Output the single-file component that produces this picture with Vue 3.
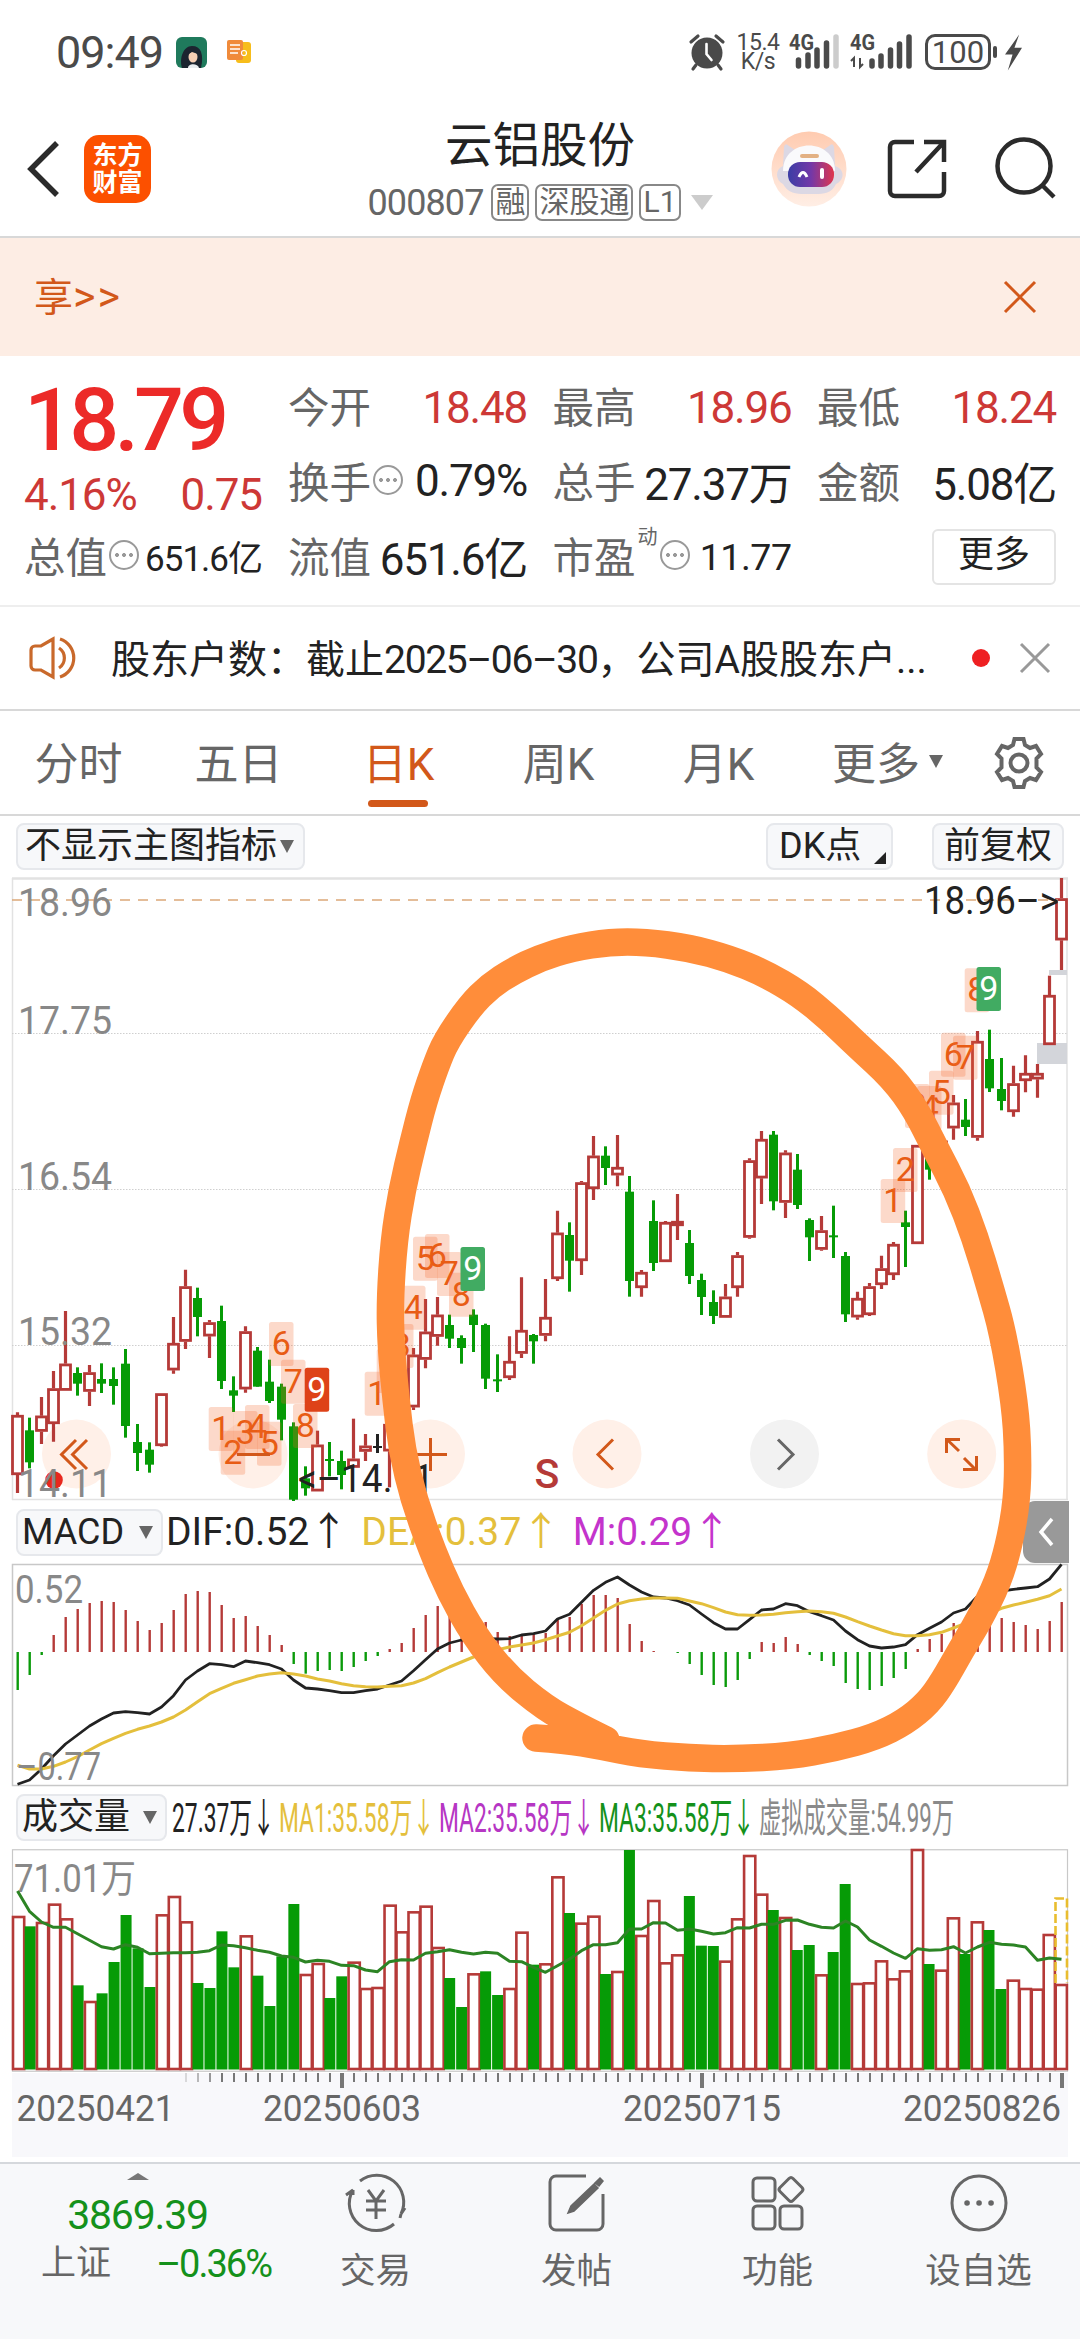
<template>
  <div class="page">
    <!-- 状态栏 -->
    <div class="status-bar">
      <span class="clock">09:49</span>
      <svg class="app-avatar" viewBox="0 0 31 31">
        <rect width="31" height="31" rx="6" fill="#1f7a5c" />
        <path d="M6 31C3 22 7 9 16 9s12 8 9 22z" fill="#1c2530" />
        <ellipse cx="17" cy="20" rx="4.500" ry="5.500" fill="#f6cfb4" />
        <path d="M11 18c2-6 9-6 11-1l-6-2z" fill="#1c2530" />
        <path d="M12 31c0-5 10-5 11 0z" fill="#e9edf0" />
      </svg>
      <svg class="app-doc" viewBox="0 0 24 24">
        <rect x="9" y="2" width="15" height="21" rx="3" fill="#f7bd1b" />
        <rect width="16" height="20" rx="2" fill="#f08a3a" />
        <path d="M3 5h10M3 9h10M3 13h8" stroke="#fff" stroke-width="1.4" />
        <circle cx="17" cy="13" r="2.5" fill="none" stroke="#fff" stroke-width="1.2" />
      </svg>
      <div class="status-right">
        <svg class="alarm" viewBox="0 0 36 36">
          <circle cx="18" cy="19" r="15.5" fill="#4a4a4a" />
          <path d="M2 8l7-6M34 8l-7-6M7 31l-3 4M29 31l3 4" stroke="#4a4a4a" stroke-width="3.2" stroke-linecap="round" />
          <path d="M17.500 10v10l5 6" stroke="#fff" stroke-width="2.600" fill="none" stroke-linecap="round" />
        </svg>
        <div class="speed"><div>15.4</div><div>K/s</div></div>
        <svg class="signal" viewBox="0 0 52 36">
          <text x="0" y="16" class="net" textLength="25" lengthAdjust="spacingAndGlyphs">4G</text>
          <path d="M9.500 26v6M19 21v11M28 16v16M37.500 9v23" class="bar" />
          <path d="M47 3v29" class="bar-off" />
        </svg>
        <svg class="signal second" viewBox="0 0 64 36">
          <text x="0" y="16" class="net" textLength="25" lengthAdjust="spacingAndGlyphs">4G</text>
          <path d="M4 33V24l-3 3M10 24v9l3-3" stroke="#4a4a4a" stroke-width="2" fill="none" />
          <path d="M22 27v5M31 22v10M40.500 16v16M49.500 10v22M59 3v29" class="bar" />
        </svg>
        <div class="battery">100</div>
        <svg class="bolt" viewBox="0 0 18 38">
          <path d="M15 0L0 21h8L3 38 18 14h-8z" fill="#4a4a4a" />
        </svg>
      </div>
    </div>

    <!-- 标题栏 -->
    <header class="header">
      <svg class="back" viewBox="0 0 34 56">
        <path d="M31 2L5 28l26 26" fill="none" stroke="#2b2b2b" stroke-width="5.500" />
      </svg>
      <div class="logo"><div>东方</div><div>财富</div></div>
      <div class="title-box">
        <div class="title">云铝股份</div>
        <div class="code-row">
          <span class="code">000807</span>
          <span class="tag">融</span>
          <span class="tag">深股通</span>
          <span class="tag">L1</span>
          <i class="caret-down light"></i>
        </div>
      </div>
      <div class="header-icons">
        <svg width="76" height="76" viewBox="0 0 76 76">
          <defs>
            <linearGradient id="face" x1="0" x2="1">
              <stop offset="0" stop-color="#3b3da5" />
              <stop offset=".5" stop-color="#7338a8" />
              <stop offset="1" stop-color="#e0364d" />
            </linearGradient>
            <linearGradient id="halo" x1="0" x2="0" y1="0" y2="1">
              <stop offset="0" stop-color="#ffcbb0" />
              <stop offset="1" stop-color="#ffeee5" />
            </linearGradient>
          </defs>
          <circle cx="38" cy="38" r="37.500" fill="url(#halo)" />
          <path d="M13 16q1-5 5-1l6 4h28l6-4q4-4 5 1l1 19c10 3 10 14 1 18-5 11-15 10-26 10S18 64 12 53c-8-4-8-15 0-18z" fill="#dcd8e4" />
          <path d="M12 40c0-34 52-34 52 0z" fill="#fafafc" />
          <rect x="29" y="23" width="19" height="4" rx="2" fill="#e3b184" />
          <rect x="17" y="31" width="46" height="25" rx="12" fill="url(#face)" />
          <path d="M28 46q4-9 8 0" fill="none" stroke="#fff" stroke-width="3" />
          <rect x="49" y="37" width="4" height="11" rx="2" fill="#fff" />
        </svg>
        <svg class="share" width="62" height="62" viewBox="0 0 62 62">
          <path d="M27 4H8a5 5 0 0 0-5 5v44a5 5 0 0 0 5 5h44a5 5 0 0 0 5-5V34" class="dark" />
          <path d="M37 4h20v20M57 4L29 34" class="dark" />
        </svg>
        <svg width="64" height="64" viewBox="0 0 64 64">
          <circle cx="30" cy="29" r="26.500" class="dark" />
          <path d="M48 48l12 12" class="dark" />
        </svg>
      </div>
    </header>

    <div class="banner">
      <span>享<em>&gt;&gt;</em></span>
      <svg width="34" height="34" viewBox="0 0 34 34">
        <path d="M2 2l30 30M32 2L2 32" stroke="#d2581a" stroke-width="3" />
      </svg>
    </div>

    <!-- 行情数据 -->
    <section class="quote">
      <div class="price-col">
        <div class="price">18.79</div>
        <div class="change"><span>4.16%</span><span>0.75</span></div>
        <div class="cell small"><label>总值</label><i class="dots"></i><b>651.6亿</b></div>
      </div>
      <div class="quote-grid">
        <div v-for="item in quotes" :key="item.label" class="cell" :class="item.cls">
          <label>{{ item.label }}</label>
          <sup v-if="item.sup">{{ item.sup }}</sup>
          <i v-if="item.dots" class="dots"></i>
          <b>{{ item.value }}</b>
        </div>
        <div class="cell more-cell"><button class="more">更多</button></div>
      </div>
    </section>

    <div class="notice">
      <svg class="speaker" width="52" height="44" viewBox="0 0 52 44">
        <path d="M24 3L12 10H6a4 4 0 0 0-4 4v16a4 4 0 0 0 4 4h6l12 7z" />
        <path d="M30 12a12 12 0 0 1 0 20M31 3a20 20 0 0 1 0 38" />
      </svg>
      <span class="notice-text">股东户数：截止<em>2025–06–30</em>，公司A股股东户...</span>
      <i class="red-dot"></i>
      <svg width="30" height="30" viewBox="0 0 30 30">
        <path d="M1 1l28 28M29 1L1 29" stroke="#999" stroke-width="3" />
      </svg>
    </div>

    <nav class="tabs">
      <div v-for="tab in tabs" :key="tab" class="tab" :class="{ active: tab === '日K' }">
        {{ tab }}<i v-if="tab === '更多'" class="caret-down"></i>
      </div>
      <svg class="gear" width="54" height="54" viewBox="0 0 54 54">
        <path
          d="M22.500 3h9l1.500 6 5 3 6-2 5 8-4.500 4.500v9L49 36l-5 8-6-2-5 3-1.500 6h-9L21 45l-5-3-6 2-5-8 4.500-4.500v-9L5 18l5-8 6 2 5-3z"
        />
        <circle cx="27" cy="27" r="8.500" />
      </svg>
    </nav>

    <div class="toolbar">
      <span class="chip main">不显示主图指标<i class="caret-down"></i></span>
      <span class="chip dk">DK点<i class="corner"></i></span>
      <span class="chip right">前复权</span>
    </div>

    <!-- K线主图 -->
    <svg class="chart" width="1080" height="624" viewBox="0 878 1080 624">
      <path d="M12 879.500H1068" stroke="#e2e2e2" stroke-width="2.500" />
      <path d="M12.500 879V1501M1067 879V1501M12 1500.500H1068" stroke="#e2e2e2" stroke-width="1.500" fill="none" />
      <path d="M12 1034.500H1067M12 1190.500H1067M12 1346.500H1067" stroke="#cfcfcf" stroke-width="1" stroke-dasharray="1.500 1.500" />
      <rect x="1049" y="971" width="18" height="5" fill="#d3d5da" />
      <rect x="1037" y="1044" width="30" height="21" fill="#d3d5da" />

      <circle v-for="b in buttons" :key="b.x" :cx="b.x" cy="1455" r="34.500" :fill="b.off ? '#f2f2f2' : '#fff0e8'" />

      <g v-for="c in candles" :key="c.x">
        <template v-if="c.type === 'r'">
          <path :d="`M${c.x} ${c.high}V${c.top}M${c.x} ${c.bottom}V${c.low}`" stroke="#b53a38" stroke-width="3.200" />
          <rect
            :x="c.x - 5"
            :y="c.top + 1.25"
            width="10"
            :height="Math.max(c.bottom - c.top - 2.5, 0.5)"
            fill="#fff"
            stroke="#b53a38"
            stroke-width="2.800"
          />
        </template>
        <template v-else>
          <path :d="`M${c.x} ${c.high}V${c.low}`" :stroke="c.type === 'g' ? '#069b06' : '#222'" stroke-width="3" />
          <rect :x="c.x - 4.5" :y="c.top" width="9" :height="c.bottom - c.top" :fill="c.type === 'g' ? '#069b06' : '#222'" />
        </template>
      </g>

      <g v-for="(m, i) in marks" :key="'m' + i">
        <rect :x="m[1]" :y="m[2]" width="24.500" height="44" rx="2.500" :fill="markFill(m)" :fill-opacity="m[3] ? 1 : 0.25" />
        <text :x="m[1] + 12.2" :y="m[2] + 33" class="mark" :fill="m[3] ? '#fff' : '#e85c14'">{{ m[0] }}</text>
      </g>

      <path d="M12 901H1058" stroke="#dba878" stroke-width="1.600" stroke-dasharray="10 8" />
      <g fill="none" stroke="#d2581a" stroke-width="3">
        <path d="M76 1441l-14.500 14.500L76 1470M87 1441l-14.500 14.500L87 1470" />
        <path d="M237 1455.500h33" />
        <path d="M430.500 1439v33M414 1455.500h33" />
        <path d="M613 1440.500l-15 15 15 15" />
        <path d="M778 1440.500l15 15-15 15" stroke="#666" />
        <path d="M959 1452l-12-11.500M946.500 1454v-13.500H960M964 1459l12 12M963 1470.500h13.500V1457" />
      </g>
      <circle cx="54" cy="1481" r="8.800" fill="#e8281e" />

      <text v-for="l in priceLabels" :key="l.text" x="18" :y="l.y" class="axis" textLength="94" lengthAdjust="spacingAndGlyphs">{{ l.text }}</text>
      <text x="924" y="915" class="peak" textLength="135" lengthAdjust="spacingAndGlyphs">18.96–&gt;</text>
      <text x="298" y="1493" class="peak" textLength="136" lengthAdjust="spacingAndGlyphs">&lt;–14.11</text>
      <text x="547" y="1489" class="sell">S</text>
    </svg>

    <!-- MACD -->
    <div class="sub-head">
      <span class="chip">MACD<i class="caret-down"></i></span>
      <span class="ind dif">DIF:0.52↑</span>
      <span class="ind dea">DEA:0.37↑</span>
      <span class="ind m">M:0.29↑</span>
      <span class="drawer">
        <svg width="16" height="30" viewBox="0 0 16 30">
          <path d="M14 2L3 15l11 13" fill="none" stroke="#fff" stroke-width="3.500" />
        </svg>
      </span>
    </div>
    <svg class="chart" width="1080" height="223" viewBox="0 1564 1080 223">
      <rect x="12.500" y="1565.500" width="1055" height="221" fill="#fff" stroke="#c8c8c8" stroke-width="1.500" />
      <path
        v-for="(v, i) in macd"
        :key="i"
        :d="`M${17.7 + i * 12} 1653V${1490 + v / 3}`"
        :stroke="v < 489 ? '#b53a38' : '#0a9a0a'"
        stroke-width="2.400"
      />
      <polyline :points="toLine(dif, 1490)" fill="none" stroke="#222" stroke-width="2.800" stroke-linejoin="round" />
      <polyline :points="toLine(dea, 1490)" fill="none" stroke="#e4bf3c" stroke-width="3" stroke-linejoin="round" />
      <text x="15" y="1604" class="axis" textLength="68" lengthAdjust="spacingAndGlyphs">0.52</text>
      <text x="16" y="1781" class="axis" textLength="85" lengthAdjust="spacingAndGlyphs">–0.77</text>
    </svg>

    <!-- 成交量 -->
    <div class="sub-head volume-head">
      <span class="chip">成交量<i class="caret-down"></i></span>
      <svg width="790" height="50" viewBox="170 1793 790 50">
        <text
          v-for="v in volumeLegend"
          :key="v.text"
          :x="v.x"
          y="1832"
          class="legend"
          :fill="v.color"
          :textLength="v.width"
          lengthAdjust="spacingAndGlyphs"
        >{{ v.text }}</text>
      </svg>
    </div>
    <svg class="chart" width="1080" height="312" viewBox="0 1850 1080 312">
      <rect x="12" y="2074" width="1056" height="84" fill="#f8f8fb" />
      <rect x="12.500" y="1850.750" width="1055" height="221.500" fill="#fff" stroke="#c8c8c8" stroke-width="1.200" />
      <text x="14" y="1893" class="axis" textLength="122" lengthAdjust="spacingAndGlyphs">71.01万</text>
      <template v-for="b in volumes" :key="b.x">
        <rect v-if="b.green" :x="b.x - 5.5" :y="b.y" width="11" :height="2070.5 - b.y" fill="#069b06" />
        <rect v-else :x="b.x - 5.2" :y="b.y" width="11.200" :height="2070 - b.y" fill="#fff" stroke="#b53a38" stroke-width="2.600" />
      </template>
      <path d="M1055.500 1984V1899.500H1067V1984" fill="none" stroke="#e9bd2f" stroke-width="2.600" stroke-dasharray="9 3" />
      <polyline :points="toLine(volumeMa, 1790)" fill="none" stroke="#2c8424" stroke-width="3" stroke-linejoin="round" />
      <path
        v-for="i in 74"
        :key="'t' + i"
        :d="`M${18 + (i + 13) * 12} 2074v${isMajor(i + 13) ? 15 : 9}`"
        stroke="#777"
        :stroke-width="isMajor(i + 13) ? 4 : 2"
        :stroke-opacity="Math.min(1, i / 4)"
      />
      <text v-for="d in dates" :key="d.text" :x="d.x" y="2121.500" class="date" textLength="158" lengthAdjust="spacingAndGlyphs">{{ d.text }}</text>
    </svg>

    <!-- 底部导航 -->
    <footer class="bottom">
      <div class="index-box">
        <i class="caret-up"></i>
        <div class="index-value">3869.39</div>
        <div class="index-row"><span>上证</span><em>–0.36%</em></div>
      </div>
      <div class="nav-item">
        <svg viewBox="0 0 66 60">
          <path d="M17 8A27 27 0 0 1 58 41l4-6M58 41l-1 4M51 51A27 27 0 0 1 10 17l-7 5M10 17v5" />
          <path d="M25 17l8 11 8-11M33 28v18M23 28h20M23 37h20" />
        </svg>
        <span>交易</span>
      </div>
      <div class="nav-item">
        <svg viewBox="0 0 66 60">
          <path d="M42 3H12a6 6 0 0 0-6 6v42a6 6 0 0 0 6 6h41a6 6 0 0 0 6-6V21" />
          <path d="M56 5l3 3-4 5-4-3zM50 11l4 4-24 23-6 2 3-7z" fill="#666" stroke-width="1.500" />
        </svg>
        <span>发帖</span>
      </div>
      <div class="nav-item">
        <svg viewBox="0 0 66 60">
          <rect x="8" y="5" width="22" height="23" rx="4" />
          <rect x="8" y="33" width="22" height="23" rx="4" />
          <rect x="35" y="33" width="22" height="23" rx="4" />
          <path d="M44 5.500q2-2 4 0l9 9q2 2 0 4l-9 9q-2 2-4 0l-9-9q-2-2 0-4z" />
        </svg>
        <span>功能</span>
      </div>
      <div class="nav-item">
        <svg viewBox="0 0 66 60">
          <circle cx="33" cy="30" r="27" />
          <path d="M21 30h.1M33 30h.1M45 30h.1" stroke-width="5.500" stroke-linecap="round" />
        </svg>
        <span>设自选</span>
      </div>
    </footer>

    <!-- 手绘圈 -->
    <svg class="doodle" width="1080" height="2340" viewBox="0 0 1080 2340">
      <path :d="doodlePath" />
    </svg>
  </div>
</template>

<script setup>
const quotes = [
  { label: '今开', value: '18.48', cls: 'up' },
  { label: '最高', value: '18.96', cls: 'up' },
  { label: '最低', value: '18.24', cls: 'up' },
  { label: '换手', value: '0.79%', dots: true },
  { label: '总手', value: '27.37万' },
  { label: '金额', value: '5.08亿' },
  { label: '流值', value: '651.6亿' },
  { label: '市盈', value: '11.77', sup: '动', dots: true, cls: 'pe' },
]

const tabs = ['分时', '五日', '日K', '周K', '月K', '更多']

const buttons = [{ x: 76.5 }, { x: 253 }, { x: 430.5 }, { x: 607 }, { x: 784.5, off: true }, { x: 961.7 }]

const priceLabels = [
  { text: '18.96', y: 917 },
  { text: '17.75', y: 1035 },
  { text: '16.54', y: 1191 },
  { text: '15.32', y: 1346 },
  { text: '14.11', y: 1498 },
]

// 每段K线: top 为起始高度, rows 为 [颜色, 最高, 实体上沿, 实体下沿, 最低], 单位 1/3 像素
const candleRuns = [
  {
    top: 1180,
    rows: [
      ['r', 700, 708, 888, 942], ['g', 716, 754, 850, 868], ['r', 654, 710, 758, 795], ['r', 576, 628, 735, 788],
      ['r', 396, 554, 635, 635], ['g', 565, 582, 614, 650], ['r', 558, 580, 638, 681], ['g', 553, 600, 614, 642],
      ['g', 565, 600, 621, 677], ['g', 510, 554, 741, 776], ['g', 735, 789, 822, 876], ['g', 790, 812, 857, 881],
      ['r', 643, 643, 801, 803], ['r', 414, 492, 574, 584], ['r', 272, 322, 488, 510], ['g', 326, 357, 414, 472],
      ['r', 423, 430, 472, 537], ['g', 380, 426, 606, 630], ['g', 592, 634, 650, 699], ['r', 442, 457, 631, 641],
      ['g', 504, 515, 623, 623], ['g', 542, 608, 666, 672], ['g', 614, 623, 722, 784], ['g', 730, 742, 962, 966],
      ['g', 862, 898, 928, 950], ['r', 755, 797, 937, 937], ['g', 789, 840, 846, 892], ['g', 815, 846, 888, 931],
      ['r', 719, 839, 866, 866], ['r', 765, 800, 818, 846], ['k', 765, 801, 807, 822], ['r', 735, 735, 817, 925],
      ['r', 640, 680, 800, 830],
    ],
  },
  {
    top: 1100,
    rows: [
      ['r', 747, 767, 925, 933], ['r', 600, 698, 782, 808], ['r', 594, 647, 713, 740], ['g', 647, 678, 719, 747],
      ['g', 709, 717, 747, 794], ['g', 631, 647, 678, 759], ['g', 674, 678, 839, 870], ['g', 766, 841, 847, 879],
      ['r', 712, 786, 837, 843], ['r', 535, 693, 764, 777], ['g', 705, 708, 727, 794], ['r', 540, 654, 710, 727],
      ['r', 335, 401, 540, 546], ['g', 370, 408, 485, 578], ['r', 246, 250, 486, 528], ['r', 111, 170, 270, 303],
      ['g', 142, 170, 207, 258], ['r', 108, 204, 229, 262], ['g', 231, 278, 546, 593], ['r', 513, 519, 567, 593],
      ['g', 304, 366, 492, 516], ['r', 366, 369, 489, 489], ['r', 285, 366, 381, 423], ['g', 393, 432, 531, 555],
      ['g', 524, 543, 594, 648], ['g', 574, 609, 651, 675], ['r', 555, 593, 656, 656], ['r', 459, 469, 567, 593],
      ['r', 178, 184, 416, 419], ['r', 96, 120, 238, 315], ['g', 96, 107, 307, 334], ['r', 154, 161, 311, 357],
      ['g', 165, 212, 318, 330], ['g', 358, 363, 415, 486], ['r', 351, 394, 452, 455], ['g', 320, 409, 415, 477],
      ['g', 459, 471, 646, 669], ['r', 578, 597, 655, 662], ['r', 552, 562, 648, 651], ['r', 470, 508, 558, 570],
      ['r', 429, 435, 528, 543], ['g', 335, 370, 384, 504], ['r', 138, 138, 435, 435], ['g', 120, 150, 212, 242],
      ['r', 105, 125, 165, 175],
    ],
  },
  {
    top: 870,
    rows: [
      ['r', 678, 701, 778, 812], ['g', 690, 752, 774, 801], ['r', 486, 516, 806, 815], ['g', 482, 570, 658, 669],
      ['g', 567, 660, 696, 724], ['r', 590, 643, 729, 743], ['r', 559, 612, 636, 670], ['r', 585, 612, 631, 686],
      ['r', 320, 378, 528, 528], ['r', 27, 88, 214, 303],
    ],
  },
]

const candles = candleRuns
  .flatMap((run) => run.rows.map(([type, ...v]) => [type, ...v.map((n) => run.top + n / 3)]))
  .map(([type, high, top, bottom, low], i) => ({ type, high, top, bottom, low, x: 17.5 + i * 12 }))

// 九转序列 [数字, x, y, 高亮颜色]
const marks = [
  [1, 208.7, 1408], [2, 220.7, 1431.7], [3, 233, 1412], [4, 245, 1406], [5, 257, 1422.7],
  [6, 269, 1323], [7, 281, 1360.7], [8, 293, 1405], [9, 304.7, 1368.7, '#de4218'],
  [1, 364.7, 1372.7], [2, 376.7, 1350], [3, 389, 1325], [4, 401, 1286.7], [5, 413, 1237.7],
  [6, 425, 1235], [7, 437, 1253], [8, 449, 1273.7], [9, 460.5, 1248, '#41ab62'],
  [1, 880.7, 1180], [2, 893, 1149], [3, 905, 1085], [4, 917, 1087], [5, 929, 1071.7],
  [6, 941, 1033.7], [7, 953, 1036.7], [8, 964.7, 969.3], [9, 976.5, 968, '#41ab62'],
]
const markFill = (m) => m[3] || '#f4662a'

const macd = [
  603, 558, 498, 438, 384, 360, 342, 336, 339, 363, 396, 423, 402, 363, 315, 306, 309, 348, 387, 381, 411, 438,
  468, 525, 554, 546, 543, 546, 534, 516, 501, 480, 462, 417, 378, 351, 348, 350, 366, 399, 429, 441, 435, 435,
  432, 390, 384, 345, 318, 318, 327, 405, 456, 486, 489, 492, 525, 558, 588, 594, 573, 510, 459, 462, 444, 465,
  498, 516, 531, 582, 600, 603, 591, 567, 540, 480, 450, 435, 402, 396, 390, 385, 387, 399, 408, 420, 396, 339,
]
const dif = [
  886, 873, 840, 800, 765, 738, 711, 690, 672, 668, 671, 675, 654, 620, 573, 546, 524, 527, 533, 516, 521, 527,
  540, 573, 597, 600, 605, 611, 611, 605, 600, 588, 576, 545, 512, 480, 462, 453, 449, 449, 450, 449, 438, 434,
  426, 390, 376, 340, 304, 280, 264, 288, 309, 324, 327, 335, 348, 375, 401, 420, 420, 392, 363, 360, 344, 350,
  368, 380, 393, 426, 452, 471, 477, 474, 467, 437, 418, 399, 372, 360, 322, 315, 306, 301, 297, 293, 270, 226,
]
const dea = [
  829, 840, 840, 832, 819, 803, 783, 764, 748, 733, 721, 711, 699, 684, 663, 638, 614, 598, 583, 572, 561, 555,
  551, 555, 561, 570, 576, 584, 590, 593, 594, 592, 590, 582, 569, 551, 534, 519, 504, 492, 482, 474, 468, 462,
  452, 441, 430, 410, 387, 364, 345, 335, 330, 327, 327, 328, 336, 344, 356, 369, 377, 379, 378, 376, 371, 368,
  366, 368, 373, 384, 398, 411, 423, 434, 440, 440, 437, 430, 417, 403, 389, 373, 358, 348, 340, 331, 320, 300,
]

// 负数为阴线
const volumeTops = [
  384, -412, 402, 347, 391, -589, 639, -613, -519, -378, -478, -594, 379, 324, 400, -582, -597, -427, -535, 442,
  -560, -651, -502, -345, 558, 525, -627, -562, 521, 600, 597, 350, 430, 370, 353, 477, -567, -654, 556, -547,
  -618, 600, 431, -527, 526, 265, -372, 404, 383, -555, 549, -183, 441, 336, 523, 499, -321, -470, -471, 518,
  391, 201, 317, -363, 387, -483, -468, 559, -489, -285, 585, 583, 517, 571, 547, 183, -525, 545, 388, -495,
  400, -423, -600, 575, 600, 602, 438, 588,
]
const volumes = volumeTops.map((v, i) => ({ green: v < 0, x: 18.2 + i * 11.985, y: 1790 + Math.abs(v) / 3 }))

const volumeMa = [
  306, 367, 399, 415, 415, 434, 454, 473, 480, 467, 475, 494, 493, 491, 491, 490, 485, 468, 470, 476, 484, 490,
  501, 505, 519, 514, 517, 529, 530, 543, 548, 518, 512, 513, 493, 488, 482, 490, 495, 490, 493, 517, 518, 535,
  550, 530, 510, 485, 467, 467, 461, 420, 420, 401, 402, 424, 420, 427, 435, 431, 416, 417, 406, 406, 394, 393,
  406, 415, 417, 396, 414, 453, 472, 492, 508, 479, 484, 482, 473, 492, 474, 460, 466, 468, 474, 514, 507, 511,
]

const volumeLegend = [
  { text: '27.37万↓', x: 172, width: 103, color: '#222' },
  { text: 'MA1:35.58万↓', x: 279, width: 156, color: '#e4bf3c' },
  { text: 'MA2:35.58万↓', x: 439, width: 156, color: '#b636c4' },
  { text: 'MA3:35.58万↓', x: 599, width: 156, color: '#14911b' },
  { text: '虚拟成交量:54.99万', x: 759, width: 195, color: '#8a8a8a' },
]

const dates = [
  { text: '20250421', x: 16.5 },
  { text: '20250603', x: 263 },
  { text: '20250715', x: 623 },
  { text: '20250826', x: 903 },
]

const isMajor = (i) => i % 30 === 27
const toLine = (list, top) => list.map((v, i) => `${17.5 + i * 12},${(top + v / 3).toFixed(1)}`).join(' ')

const doodle = [
  [536, 1738], [565, 1740], [600, 1746], [640, 1754], [690, 1758], [735, 1759], [790, 1756], [835, 1748], [875, 1737],
  [905, 1722], [928, 1703], [943, 1682], [961, 1650], [979, 1620], [998, 1582], [1009, 1545], [1017, 1500], [1018, 1453],
  [1015, 1405], [1003, 1333], [990, 1287], [975, 1237], [957, 1190], [935, 1148], [916, 1110], [893, 1078], [857, 1045],
  [830, 1019], [800, 994], [764, 973], [730, 959], [690, 948], [645, 942], [610, 942], [572, 948], [540, 958], [513, 971],
  [490, 986], [470, 1006], [446, 1041], [436, 1065], [424, 1100], [413, 1143], [402, 1190], [394, 1240], [390, 1300],
  [391, 1347], [396, 1400], [402, 1450], [414, 1500], [432, 1550], [450, 1592], [474, 1635], [505, 1675], [545, 1708],
  [580, 1727], [606, 1740],
]
// 中点二次曲线平滑
const doodlePath = doodle.reduce((d, p, i) => {
  if (i === 0) return `M${p[0]} ${p[1]}`
  const next = doodle[i + 1]
  if (!next) return `${d}L${p[0]} ${p[1]}`
  return `${d}Q${p[0]} ${p[1]} ${(p[0] + next[0]) / 2} ${(p[1] + next[1]) / 2}`
}, '')
</script>

<style>
body {
  background: #fff;
}
</style>

<style scoped>
.page {
  position: relative;
  width: 1080px;
  height: 2340px;
  overflow: hidden;
  display: flex;
  flex-direction: column;
  background: #fff;
  color: #222;
  font-family: Roboto, 'Noto Sans CJK SC', sans-serif;
}
.page * {
  box-sizing: border-box;
}
.page > * {
  flex-shrink: 0;
}
.page svg {
  display: block;
  overflow: visible;
}
em,
i,
b {
  font-style: normal;
  font-weight: 400;
}

/* 状态栏 */
.status-bar {
  height: 107px;
  padding: 0 58px 3px 56px;
  display: flex;
  align-items: center;
  color: #4a4a4a;
}
.clock {
  font-size: 45px;
  letter-spacing: -1px;
}
.app-avatar {
  width: 31px;
  height: 31px;
  margin-left: 13px;
}
.app-doc {
  width: 24px;
  height: 24px;
  margin-left: 20px;
}
.status-right {
  margin-left: auto;
  display: flex;
  align-items: center;
}
.alarm {
  width: 36px;
  height: 36px;
}
.speed {
  width: 44px;
  margin-left: 11px;
  font-size: 23px;
  line-height: 19px;
  text-align: center;
  letter-spacing: -0.5px;
}
.signal {
  width: 52px;
  height: 36px;
  margin-left: 9px;
}
.signal.second {
  width: 64px;
  margin-left: 9px;
}
.net {
  font-size: 22px;
  font-weight: 700;
  fill: #4a4a4a;
}
.bar,
.bar-off {
  stroke: #4a4a4a;
  stroke-width: 5.5;
  stroke-linecap: round;
}
.bar-off {
  stroke: #ccc;
}
.battery {
  position: relative;
  width: 66px;
  height: 36px;
  margin-left: 11px;
  border: 3px solid #4a4a4a;
  border-radius: 10px;
  font-size: 31px;
  line-height: 31px;
  text-align: center;
}
.battery::after {
  content: '';
  position: absolute;
  right: -9px;
  top: 9px;
  width: 4px;
  height: 12px;
  border-radius: 2px;
  background: #4a4a4a;
}
.bolt {
  width: 17px;
  height: 37px;
  margin-left: 14px;
}

/* 标题栏 */
.header {
  height: 131px;
  padding: 0 27px 5px 26px;
  display: grid;
  grid-template-columns: 34px 68px 643px 282px;
  align-items: center;
  border-bottom: 2px solid #d8d8d8;
}
.back {
  width: 34px;
  height: 56px;
}
.logo {
  width: 67px;
  height: 68px;
  margin-left: 24px;
  padding-top: 7px;
  border-radius: 15px;
  background: #fc5000;
  color: #fff;
  font-size: 25px;
  line-height: 27px;
  font-weight: 700;
  text-align: center;
}
.title-box {
  width: 460px;
  margin-left: 182px;
  padding-top: 4px;
  display: flex;
  flex-direction: column;
  align-items: center;
}
.title {
  height: 63px;
  font-size: 47.500px;
  line-height: 56px;
}
.code-row {
  display: flex;
  align-items: center;
  height: 44px;
  color: #666;
}
.code {
  font-size: 36px;
  letter-spacing: -0.9px;
  margin-right: 8px;
}
.tag {
  height: 37px;
  margin-right: 6px;
  padding: 0 2px;
  border: 2px solid #888;
  border-radius: 7px;
  font-size: 30px;
  line-height: 31px;
}
.caret-down {
  display: inline-block;
  border: 7px solid transparent;
  border-top: 13px solid #666;
  border-bottom: 0;
}
.caret-down.light {
  margin-left: 4px;
  border-width: 15px 11px 0;
  border-top-color: #ccc;
}
.header-icons {
  grid-column: 4;
  display: flex;
  align-items: center;
}
.share {
  margin: 0 45px 0 40px;
}
.dark {
  fill: none;
  stroke: #2b2b2b;
  stroke-width: 4.5;
}

.banner {
  height: 118px;
  padding: 0 43px 0 34px;
  display: flex;
  align-items: center;
  justify-content: space-between;
  background: #fdede4;
  color: #d2581a;
  font-size: 39px;
}
.banner span {
  padding-bottom: 6px;
}
.banner em {
  font-size: 43px;
  letter-spacing: 2px;
}

/* 行情数据 */
.quote {
  height: 251px;
  padding: 14px 24px 0;
  display: flex;
  border-bottom: 2px solid #eee;
}
.price-col {
  width: 239px;
}
.price {
  height: 101px;
  padding: 4px 0 0;
  font-size: 88px;
  line-height: 91px;
  font-weight: 500;
  letter-spacing: -4.8px;
  color: #ec2a28;
}
.change {
  height: 49px;
  display: flex;
  justify-content: space-between;
  font-size: 44px;
  line-height: 49px;
  letter-spacing: -1.1px;
  color: #cd3836;
}
.quote-grid {
  width: 768px;
  margin-left: 26px;
  display: grid;
  grid-template-columns: repeat(3, 239px);
  grid-template-rows: repeat(3, 75px);
  column-gap: 25.500px;
}
.cell {
  height: 75px;
  display: flex;
  align-items: center;
  white-space: nowrap;
}
.cell label {
  padding-bottom: 6px;
  font-size: 41.500px;
  color: #666;
}
.cell b {
  margin-left: auto;
  padding-bottom: 3px;
  font-size: 44px;
  letter-spacing: -1.2px;
}
.cell.small b {
  font-size: 35px;
  letter-spacing: -1px;
  padding-bottom: 4px;
}
.cell.pe b {
  font-size: 37.500px;
  letter-spacing: -0.5px;
  padding-bottom: 2px;
}
.cell.up b {
  padding-bottom: 0;
  color: #cd3836;
}
.cell sup {
  align-self: flex-start;
  margin: 2px 0 0 2px;
  font-size: 20px;
  line-height: 30px;
  color: #666;
}
.dots {
  width: 30px;
  height: 30px;
  margin: 0 0 5px 2px;
  border: 2px solid #999;
  border-radius: 50%;
  background:
    radial-gradient(circle at 6px 50%, #999 1.8px, transparent 2.2px),
    radial-gradient(circle at 13px 50%, #999 1.8px, transparent 2.2px),
    radial-gradient(circle at 20px 50%, #999 1.8px, transparent 2.2px);
}
.more-cell {
  justify-content: flex-end;
}
.more {
  width: 124px;
  height: 56px;
  margin-bottom: 2px;
  padding: 0 0 4px;
  border: 2px solid #e4e4e4;
  border-radius: 6px;
  background: #fff;
  font: inherit;
  font-size: 36px;
  line-height: 48px;
  color: #222;
}

.notice {
  height: 104px;
  padding: 0 30px 0 29px;
  display: flex;
  align-items: center;
  border-bottom: 2px solid #d8d8d8;
}
.speaker {
  fill: none;
  stroke: #c9692b;
  stroke-width: 3.2;
}
.notice-text {
  width: 830px;
  margin-left: 30px;
  padding-bottom: 4px;
  font-size: 39px;
  white-space: nowrap;
}
.notice-text em {
  letter-spacing: -1.3px;
}
.red-dot {
  width: 18px;
  height: 18px;
  margin: 0 auto 0 31px;
  border-radius: 50%;
  background: #ee2022;
}

.tabs {
  height: 105px;
  display: flex;
  align-items: center;
  border-bottom: 2px solid #d8d8d8;
}
.tab {
  position: relative;
  width: 160px;
  height: 103px;
  padding: 0 3px 3px 0;
  display: flex;
  align-items: center;
  justify-content: center;
  font-size: 44px;
  color: #666;
}
.tab:last-of-type {
  width: 178px;
}
.tab .caret-down {
  margin-left: 9px;
}
.tab.active {
  color: #d2581a;
}
.tab.active::after {
  content: '';
  position: absolute;
  left: 48px;
  bottom: 7px;
  width: 60px;
  height: 7px;
  border-radius: 4px;
  background: #d2581a;
}
.gear {
  margin-left: 14px;
  fill: none;
  stroke: #666;
  stroke-width: 4;
}

.toolbar {
  height: 61px;
  padding: 0 16px;
  display: flex;
  align-items: center;
}
.chip {
  position: relative;
  height: 47px;
  padding: 0 8px 0 7px;
  border: 2px solid #e6e8ec;
  border-radius: 8px;
  background: #f7f8fa;
  display: flex;
  align-items: center;
  font-size: 36px;
  line-height: 43px;
  white-space: nowrap;
}
.chip.main {
  width: 289px;
}
.chip .caret-down {
  margin-left: 3px;
}
.chip.dk {
  width: 127px;
  margin: 0 39px 0 auto;
  padding-left: 11px;
}
.chip.right {
  width: 132px;
  padding: 0;
  justify-content: center;
}
.corner {
  position: absolute;
  right: 5px;
  bottom: 4px;
  border-left: 12px solid transparent;
  border-bottom: 12px solid #222;
}

/* 图表 */
.axis {
  font-size: 39px;
  fill: #888;
}
.peak {
  font-size: 39px;
  fill: #222;
}
.mark {
  font-size: 34px;
  text-anchor: middle;
}
.sell {
  font-size: 41px;
  font-weight: 500;
  fill: #b53a38;
  text-anchor: middle;
}
.date {
  font-size: 37px;
  fill: #666;
}
.legend {
  font-size: 40px;
}
.sub-head {
  height: 62px;
  padding-left: 16px;
  display: flex;
  align-items: center;
}
.sub-head .chip {
  width: 147px;
  font-size: 36px;
  padding: 0 8px 0 4px;
  justify-content: space-between;
}
.ind {
  margin-left: 3px;
  font-size: 39px;
  line-height: 56px;
  white-space: nowrap;
}
.dea {
  margin-left: 13px;
  letter-spacing: 0.2px;
  color: #e4bf3c;
}
.m {
  margin-left: 12px;
  color: #c434cc;
}
.drawer {
  width: 46px;
  height: 62px;
  margin: 0 11px 0 auto;
  border-radius: 12px 0 0 12px;
  background: #999;
  display: flex;
  align-items: center;
  justify-content: center;
}
.volume-head {
  height: 63px;
}
.volume-head .chip {
  width: 151px;
  margin-right: 3px;
}

/* 底部导航 */
.bottom {
  height: 177px;
  margin-top: 1px;
  display: flex;
  border-top: 2px solid #d5d8dc;
  background: #f7f8fa;
}
.index-box {
  width: 275px;
  padding-top: 9px;
  display: flex;
  flex-direction: column;
  align-items: center;
}
.caret-up {
  border: 11px solid transparent;
  border-bottom: 7px solid #777;
  border-top: 0;
}
.index-value {
  margin-top: 9px;
  font-size: 41px;
  line-height: 52px;
  letter-spacing: -1.2px;
  color: #14911b;
}
.index-row {
  width: 230px;
  margin-left: 37px;
  display: flex;
  justify-content: space-between;
  font-size: 35px;
  line-height: 46px;
  color: #666;
}
.index-row em {
  font-size: 38px;
  letter-spacing: -2px;
  color: #14911b;
}
.nav-item {
  width: 201px;
  padding-top: 9px;
  display: flex;
  flex-direction: column;
  align-items: center;
  font-size: 35.500px;
  line-height: 50px;
  color: #666;
}
.nav-item svg {
  width: 66px;
  height: 60px;
  margin-bottom: 13px;
  fill: none;
  stroke: #666;
  stroke-width: 3;
}

.doodle {
  position: absolute;
  left: 0;
  top: 0;
  fill: none;
  stroke: #ff8d3a;
  stroke-width: 27.5;
  stroke-linecap: round;
  stroke-linejoin: round;
}
</style>
